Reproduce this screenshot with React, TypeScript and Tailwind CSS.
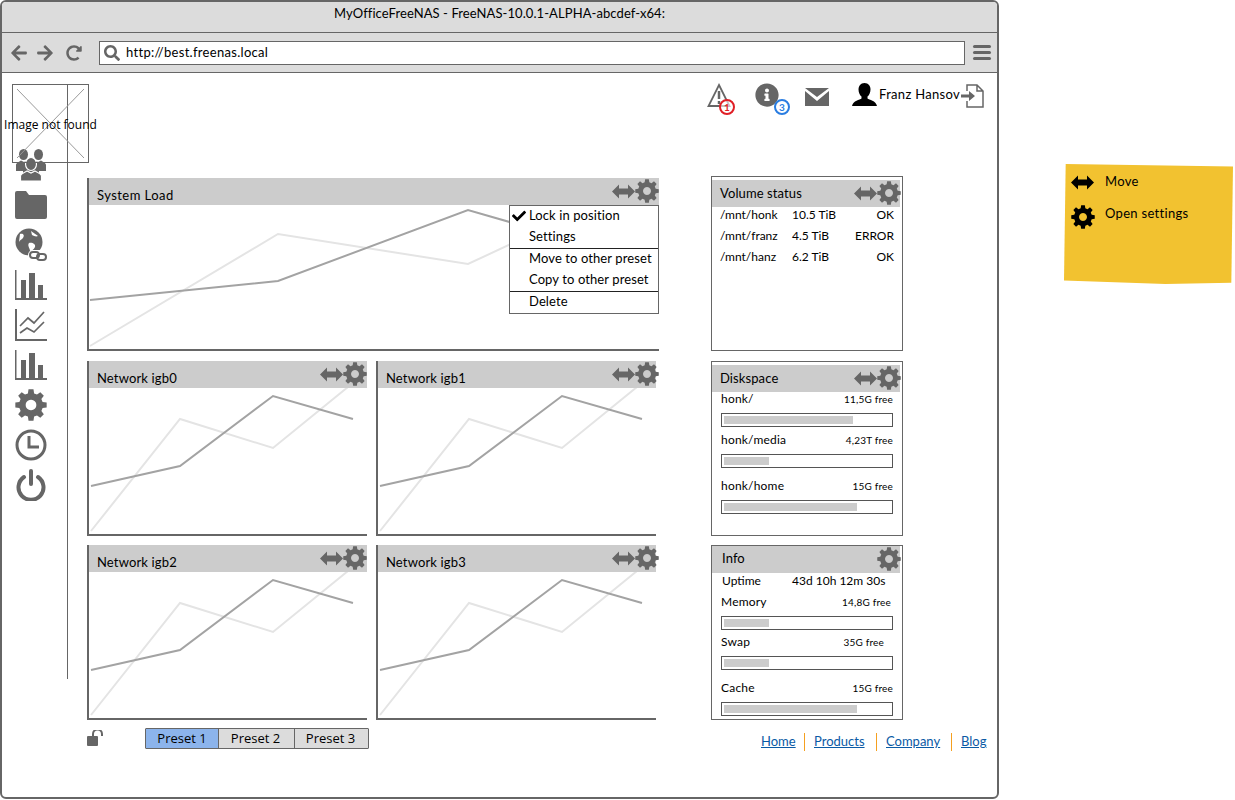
import React from 'react';
import { FaArrowLeft, FaArrowRight, FaRedoAlt, FaSearch, FaCheck, FaInfoCircle } from 'react-icons/fa';

const gearPath = (() => {
  const pts: string[] = [];
  const pt = (r: number, deg: number) => {
    const a = (deg * Math.PI) / 180;
    return `${(12 + r * Math.cos(a)).toFixed(2)} ${(12 + r * Math.sin(a)).toFixed(2)}`;
  };
  for (let i = 0; i < 8; i++) {
    const c = i * 45;
    pts.push(pt(9, c - 15), pt(11.9, c - 9), pt(11.9, c + 9), pt(9, c + 15));
  }
  return `M${pts.join('L')}Z M12 8a4 4 0 1 0 0.01 0Z`;
})();

const Gear = ({ className = '' }: { className?: string }) => (
  <svg viewBox="0 0 24 24" className={className} fill="currentColor" fillRule="evenodd">
    <path d={gearPath} />
  </svg>
);

const MoveIcon = ({ className = '' }: { className?: string }) => (
  <svg viewBox="0 0 23 15" className={className} fill="currentColor">
    <path d="M0 7.5 7 0.5V4.5H16V0.5L23 7.5 16 14.5V10.5H7V14.5Z" />
  </svg>
);

const dark = [[2, 98], [91, 78], [184, 8], [264, 31]];
const light = [[2, 143], [91, 31], [184, 60], [270, -10]];
const toPoints = (p: number[][]) => p.map((q) => q.join(',')).join(' ');

const HeaderTools = ({ className = 'right-0' }: { className?: string }) => (
  <div className={`absolute top-[1px] flex items-center text-[#666] ${className}`}>
    <MoveIcon className="w-[23px] h-[15px]" />
    <Gear className="w-[24px] h-[24px]" />
  </div>
);

const NetworkWidget = ({ title, toolsClass }: { title: string; toolsClass?: string }) => (
  <div className="w-[280px] h-[175px] flex flex-col border-l-2 border-b-2 border-[#666]">
    <div className="relative h-[27px] shrink-0 bg-[#ccc] pl-[8px] pt-[8px] text-[13px] leading-[18px] tracking-[0.15px] text-black">
      {title}
      <HeaderTools className={toolsClass} />
    </div>
    <svg className="w-full flex-1" viewBox="0 0 278 146" preserveAspectRatio="none">
      <polyline points={toPoints(light)} fill="none" stroke="#e4e4e4" strokeWidth="2" />
      <polyline points={toPoints(dark)} fill="none" stroke="#a3a3a3" strokeWidth="2" />
    </svg>
  </div>
);

const menuItems = [
  { label: 'Lock in position', checked: true },
  { label: 'Settings', line: true },
  { label: 'Move to other preset' },
  { label: 'Copy to other preset', line: true },
  { label: 'Delete' },
];

const SystemLoad = () => (
  <div className="relative w-[572px] h-[173px] flex flex-col border-l-2 border-b-2 border-[#666]">
    <div className="relative h-[27px] shrink-0 bg-[#ccc] pl-[8px] pt-[8px] text-[13px] leading-[18px] tracking-[0.45px] text-black">
      System Load
      <HeaderTools />
    </div>
    <svg className="w-full flex-1" viewBox="0 0 570 144">
      <polyline points="1,141 189,29 379,59 570,-30" fill="none" stroke="#e4e4e4" strokeWidth="2" />
      <polyline points="1,95 189,76 379,5 570,60" fill="none" stroke="#a3a3a3" strokeWidth="2" />
    </svg>
    <div className="absolute left-[420px] top-[27px] w-[150px] h-[109px] bg-white border border-[#666] text-[13px] tracking-[0.1px] text-black">
      {menuItems.map((it) => (
        <div
          key={it.label}
          className={`relative pl-[19px] leading-[19px] ${it.line ? 'h-[22px] border-b border-[#222]' : 'h-[21px]'}`}
        >
          {it.checked && <FaCheck className="absolute left-[2px] top-[3px] w-[14px] h-[14px]" />}
          {it.label}
        </div>
      ))}
    </div>
  </div>
);

const Bar = ({ pct }: { pct: string }) => (
  <div className="w-[172px] h-[14px] border border-[#555] p-[2px] bg-white">
    <div className={`${pct} h-full bg-[#ccc]`} />
  </div>
);

const UsageRow = ({ label, free, pct, className = '', freeClass = '' }: { label: string; free: string; pct: string; className?: string; freeClass?: string }) => (
  <div className={`ml-[9px] w-[172px] ${className}`}>
    <div className="flex items-center justify-between h-[14px] text-[12px] tracking-[0.2px] text-black">
      <span>{label}</span>
      <span className={`text-[10px] ${freeClass}`}>{free}</span>
    </div>
    <div className="mt-[7px]"><Bar pct={pct} /></div>
  </div>
);

const volumes = [
  ['/mnt/honk', '10.5 TiB', 'OK'],
  ['/mnt/franz', '4.5 TiB', 'ERROR'],
  ['/mnt/hanz', '6.2 TiB', 'OK'],
];

const SideHeader = ({ title, move = true, className = '' }: { title: string; move?: boolean; className?: string }) => (
  <div className={`relative w-[188px] h-[27px] bg-[#ccc] pl-[8px] pt-[5px] text-[13px] leading-[17px] tracking-[0.1px] text-black ${className}`}>
    {title}
    <div className="absolute -right-[1px] top-[1px] flex items-center text-[#666]">
      {move && <MoveIcon className="w-[23px] h-[15px]" />}
      <Gear className="w-[24px] h-[24px]" />
    </div>
  </div>
);

const SideIcon = ({ children }: { children: React.ReactNode }) => (
  <div className="h-[40px] flex items-center justify-center text-[#666]">{children}</div>
);

const BarsIcon = () => (
  <svg viewBox="0 0 32 30" className="w-[32px] h-[30px]" fill="currentColor">
    <path d="M0 0H1.5V28H32V30H0Z" />
    <rect x="6" y="10" width="5" height="18" />
    <rect x="14" y="3" width="6" height="25" />
    <rect x="23" y="15" width="5" height="13" />
  </svg>
);

const App = () => {
  return (
    <div className="relative flex items-start w-[1235px] h-[800px] bg-white font-['Lato',sans-serif] tracking-[0.3px]">
      <div className="w-[999px] h-[799px] shrink-0 border-2 border-[#666] rounded-[6px] flex flex-col overflow-hidden">
        <div className="h-[31px] shrink-0 bg-[#dcdcdc] border-b border-[#666] text-center text-[13px] leading-[22px] tracking-[0.08px] text-black">
          MyOfficeFreeNAS - FreeNAS-10.0.1-ALPHA-abcdef-x64:
        </div>
        <div className="h-[40px] shrink-0 bg-[#dcdcdc] border-b border-[#666] flex items-center text-[#666]">
          <FaArrowLeft className="ml-[8px] w-[18px] h-[18px]" />
          <FaArrowRight className="ml-[8px] w-[18px] h-[18px]" />
          <FaRedoAlt className="ml-[12px] w-[16px] h-[16px]" />
          <div className="ml-[17px] w-[866px] h-[24px] bg-white border border-[#666] flex items-center text-black text-[13px]">
            <FaSearch className="ml-[4px] w-[16px] h-[16px] text-[#666]" />
            <span className="ml-[6px]">http://best.freenas.local</span>
          </div>
          <div className="ml-[8px] w-[18px] flex flex-col gap-[3px]">
            <div className="h-[3px] rounded-full bg-[#666]" />
            <div className="h-[3px] rounded-full bg-[#666]" />
            <div className="h-[3px] rounded-full bg-[#666]" />
          </div>
        </div>

        <div className="relative flex flex-1 min-h-0">
          <div className="absolute left-[10px] top-[11px] w-[77px] h-[79px] border border-[#666] flex items-center justify-center">
            <svg className="absolute inset-[4px] w-[67px] h-[69px]" viewBox="0 0 67 69">
              <path d="M0 0 67 69M67 0 0 69" stroke="#999" strokeWidth="1" fill="none" />
            </svg>
            <span className="relative mt-[2px] whitespace-nowrap text-[12px] tracking-normal font-['Open_Sans',sans-serif] text-black">Image not found</span>
          </div>

          <div className="w-[66px] shrink-0 mt-[11px] h-[595px] border-r border-[#666] pt-[61px] pl-[13px] pr-[20px]">
            <SideIcon>
              <svg viewBox="0 0 32 32" className="w-[32px] h-[32px]" fill="currentColor">
                <ellipse cx="8.5" cy="5.5" rx="4.5" ry="5.5" />
                <ellipse cx="23.5" cy="5.5" rx="4.5" ry="5.5" />
                <path d="M1 22V16C1 14 4 13 6 11.5L9 13 12 11.5 20 11.5 23 13 26 11.5C28 13 31 14 31 16V22H24V26H8V22Z" />
                <ellipse cx="16" cy="15" rx="5.5" ry="6.5" stroke="#fff" strokeWidth="1.2" />
                <path d="M5.5 32V27C5.5 25 9 23.5 12 22L16 24 20 22C23 23.5 26.5 25 26.5 27V32Z" stroke="#fff" strokeWidth="1.2" />
              </svg>
            </SideIcon>
            <SideIcon>
              <svg viewBox="0 0 32 28" className="w-[32px] h-[28px]" fill="currentColor">
                <path d="M2 0H11L14 4H30A2 2 0 0 1 32 6V26A2 2 0 0 1 30 28H2A2 2 0 0 1 0 26V2A2 2 0 0 1 2 0Z" />
              </svg>
            </SideIcon>
            <SideIcon>
              <svg viewBox="0 0 32 34" className="w-[32px] h-[34px]">
                <circle cx="14" cy="14" r="13.5" fill="#666" />
                <path d="M5 6C8 5 10 7 8 10 6 12 5 12 4 14ZM16 3C18 5 21 6 23 8 21 9 19 8 17 7ZM14 15C17 14 21 16 20 19 19 21 17 23 15 23 15 20 12 18 14 15Z" fill="#fff" />
                <rect x="13" y="22" width="19" height="11" rx="5" fill="#fff" />
                <rect x="15" y="24" width="9" height="6" rx="3" fill="none" stroke="#666" strokeWidth="2" />
                <rect x="22" y="26" width="9" height="6" rx="3" fill="none" stroke="#666" strokeWidth="2" />
              </svg>
            </SideIcon>
            <SideIcon><BarsIcon /></SideIcon>
            <SideIcon>
              <svg viewBox="0 0 32 32" className="w-[32px] h-[32px]" fill="none" stroke="currentColor">
                <path d="M1 0V31H32" strokeWidth="2" />
                <path d="M5 17 13 9 19 14 29 3" strokeWidth="1.7" />
                <path d="M5 24 12 19 19 23 29 13" strokeWidth="1.7" />
              </svg>
            </SideIcon>
            <SideIcon><BarsIcon /></SideIcon>
            <SideIcon><Gear className="w-[32px] h-[32px]" /></SideIcon>
            <SideIcon>
              <svg viewBox="0 0 32 32" className="w-[32px] h-[32px]" fill="none" stroke="currentColor" strokeWidth="3">
                <circle cx="16" cy="16" r="14" />
                <path d="M14 7V18H24" />
              </svg>
            </SideIcon>
            <SideIcon>
              <svg viewBox="0 0 30 32" className="w-[30px] h-[32px]" fill="none" stroke="currentColor" strokeWidth="4" strokeLinecap="round">
                <path d="M8 8A12.5 12.5 0 1 0 22 8" />
                <path d="M15 2V15" />
              </svg>
            </SideIcon>
          </div>

          <div className="flex-1 min-w-0 ml-[19px] flex flex-col">
            <div className="h-[105px] shrink-0 flex items-start justify-end pr-[12px] pt-[10px]">
              <div className="relative w-[28px] h-[32px] text-[#666]">
                <svg viewBox="0 0 24 24" className="w-[24px] h-[24px]" fill="none" stroke="currentColor" strokeWidth="1.8">
                  <path d="M12 2 22.5 23H1.5Z" />
                  <path d="M12 8V16M12 18V21" strokeWidth="2.5" />
                </svg>
                <div className="absolute left-[12px] top-[16px] w-[16px] h-[16px] rounded-full border-2 border-[#e01f26] bg-white/60 flex items-center justify-center text-[10px] font-bold leading-none text-[#e01f26]">1</div>
              </div>
              <div className="relative ml-[20px] w-[35px] h-[32px] text-[#666]">
                <FaInfoCircle className="w-[24px] h-[24px]" />
                <div className="absolute left-[19px] top-[16px] w-[16px] h-[16px] rounded-full border-2 border-[#2a7de1] bg-white flex items-center justify-center text-[10px] font-bold leading-none text-[#2a7de1]">3</div>
              </div>
              <svg viewBox="0 0 24 18" className="ml-[15px] mt-[5px] w-[24px] h-[18px]" fill="#666">
                <path d="M0 3 12 13 24 3V18H0ZM0 0H24L12 9Z" />
              </svg>
              <svg viewBox="0 0 25 23" className="ml-[23px] w-[25px] h-[23px]" fill="#000">
                <path d="M12.5 0C16.5 0 18.5 3 18.5 6.5 18.5 9.5 17 12.5 15.5 13.5V15.5C17 17 24 17.5 25 23H0C1 17.5 8 17 9.5 15.5V13.5C8 12.5 6.5 9.5 6.5 6.5 6.5 3 8.5 0 12.5 0Z" />
              </svg>
              <span className="ml-[2px] text-[13px] leading-[22px] text-black whitespace-nowrap">Franz Hansov</span>
              <svg viewBox="0 0 24 24" className="ml-[1px] mt-[1px] w-[24px] h-[24px]" fill="none" stroke="#666" strokeWidth="1.5">
                <path d="M6 7V1H16L22 7V23H6V17M16 1V7H22" />
                <path d="M0 10.5H8V7L14 12 8 17V13.5H0Z" fill="#666" stroke="none" />
              </svg>
            </div>

            <div className="flex gap-[52px]">
              <div className="w-[572px] flex flex-col">
                <SystemLoad />
                <div className="mt-[10px] flex gap-[9px]">
                  <NetworkWidget title="Network igb0" />
                  <NetworkWidget title="Network igb1" toolsClass="-right-[3px]" />
                </div>
                <div className="mt-[9px] flex gap-[9px]">
                  <NetworkWidget title="Network igb2" />
                  <NetworkWidget title="Network igb3" toolsClass="-right-[3px]" />
                </div>
              </div>

              <div className="w-[192px] -mt-[2px] flex flex-col text-black">
                <div className="h-[175px] border border-[#666] pt-[3px]">
                  <SideHeader title="Volume status" />
                  <div className="-mt-[3px] text-[12px] tracking-normal">
                    {volumes.map(([m, s, st]) => (
                      <div key={m} className="h-[21px] flex items-center pl-[8px] pr-[8px]">
                        <span className="w-[72px]">{m}</span>
                        <span>{s}</span>
                        <span className="ml-auto">{st}</span>
                      </div>
                    ))}
                  </div>
                </div>
                <div className="mt-[10px] h-[175px] border border-[#666] pt-[3px]">
                  <SideHeader title="Diskspace" />
                  <UsageRow label="honk/" free="11,5G free" pct="w-[78%]" className="mt-0" />
                  <UsageRow label="honk/media" free="4,23T free" pct="w-[27%]" className="mt-[6px]" />
                  <UsageRow label="honk/home" free="15G free" pct="w-[80%]" className="mt-[11px]" />
                </div>
                <div className="mt-[9px] h-[175px] border border-[#666]">
                  <SideHeader title="Info" move={false} className="pl-[10px] !pt-[4px]" />
                  <div className="flex items-center h-[16px] text-[12px] tracking-normal pl-[10px]">
                    <span className="w-[70px]">Uptime</span>
                    <span>43d 10h 12m 30s</span>
                  </div>
                  <UsageRow label="Memory" free="14,8G free" pct="w-[27%]" className="mt-[6px]" freeClass="mr-[2px]" />
                  <UsageRow label="Swap" free="35G free" pct="w-[27%]" className="mt-[5px]" freeClass="mr-[9px]" />
                  <UsageRow label="Cache" free="15G free" pct="w-[80%]" className="mt-[11px]" />
                </div>
              </div>
            </div>

            <div className="relative mt-[8px] flex items-start">
              <svg viewBox="0 0 17 16" className="mt-[2px] w-[17px] h-[16px]" fill="#666">
                <rect x="0" y="6" width="11" height="10" rx="1" />
                <path d="M6 6V4A4.5 4.5 0 0 1 15 4V6" fill="none" stroke="#666" strokeWidth="2" />
              </svg>
              <div className="ml-[41px] flex h-[21px] border border-[#666] rounded-[1px] text-[13px] leading-[18px] tracking-normal font-['Open_Sans',sans-serif] text-black text-center">
                <div className="w-[73px] bg-[#8cb4ec] border-r border-[#666]">Preset 1</div>
                <div className="w-[76px] pr-[2px] bg-[#dcdcdc] border-r border-[#666]">Preset 2</div>
                <div className="w-[73px] pr-[2px] bg-[#dcdcdc]">Preset 3</div>
              </div>
              <div className="ml-auto mr-[11px] mt-[5px] flex items-center h-[18px] text-[13px] tracking-normal text-[#0a5aa5]">
                <span className="w-[34px] underline whitespace-nowrap">Home</span>
                <span className="mx-[9px] w-px h-[18px] bg-[#f5a020]" />
                <span className="w-[53px] underline whitespace-nowrap">Products</span>
                <span className="mx-[9px] w-px h-[18px] bg-[#f5a020]" />
                <span className="w-[56px] underline whitespace-nowrap">Company</span>
                <span className="mx-[9px] w-px h-[18px] bg-[#f5a020]" />
                <span className="w-[25px] underline whitespace-nowrap">Blog</span>
              </div>
            </div>
          </div>
        </div>
      </div>

      <div className="ml-[65px] mt-[164px] w-[169px] h-[120px] bg-[#f2c230] [clip-path:polygon(1%_0,100%_2%,99%_99%,60%_100%,0_97%)] px-[7px] pt-[8px] text-[13px] text-black">
        <div className="flex items-center h-[20px]">
          <MoveIcon className="w-[23px] h-[15px]" />
          <span className="ml-[11px]">Move</span>
        </div>
        <div className="flex items-start h-[24px] mt-[13px]">
          <Gear className="w-[24px] h-[24px]" />
          <span className="ml-[10px] -mt-[1px]">Open settings</span>
        </div>
      </div>
    </div>
  );
};

export default App;
